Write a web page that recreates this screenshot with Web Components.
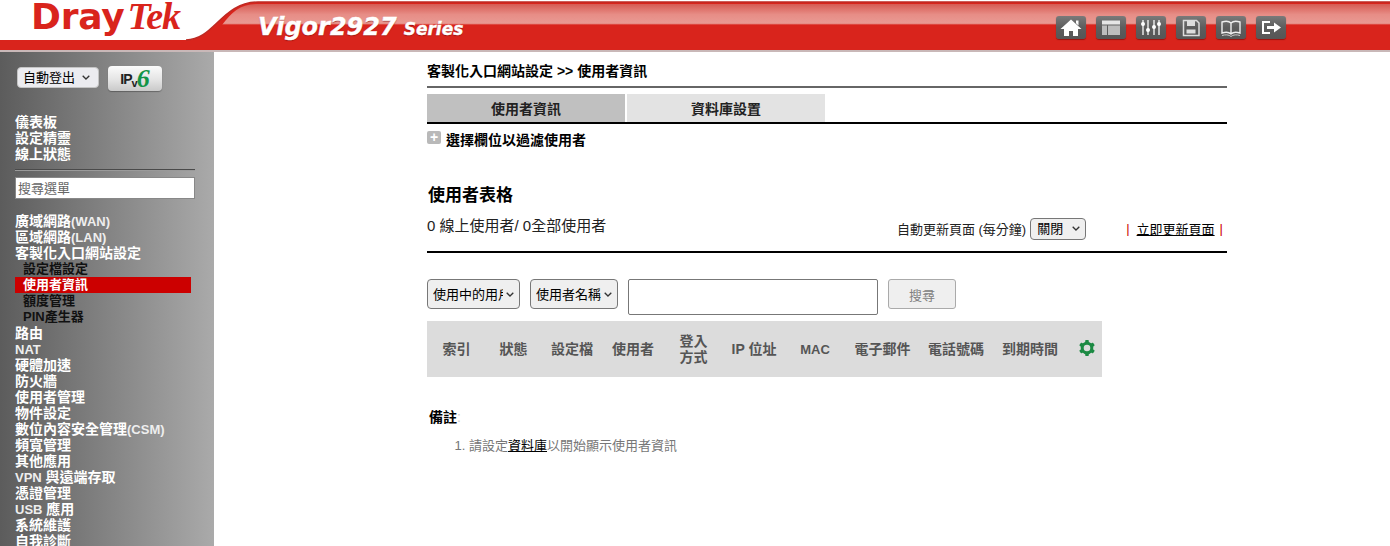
<!DOCTYPE html>
<html lang="zh-TW">
<head>
<meta charset="utf-8">
<title>Vigor2927 Series</title>
<style>
  html, body { margin: 0; height: 546px; overflow: hidden; background: #fff; }
  body { font-family: "Liberation Sans", "Noto Sans CJK TC", sans-serif; display: flex; flex-direction: column; }
  .row { display: flex; flex: 1; min-height: 0; }
  dt-menu-item span { font-size: 13px; color: #eee; }
</style>
</head>
<body>
<dt-header></dt-header>
<div class="row">
  <dt-sidebar>
    <dt-menu-item>儀表板</dt-menu-item>
    <dt-menu-item>設定精靈</dt-menu-item>
    <dt-menu-item>線上狀態</dt-menu-item>
    <dt-menu-search slot="search"></dt-menu-search>
    <dt-menu-item slot="main">廣域網路<span>(WAN)</span></dt-menu-item>
    <dt-menu-item slot="main">區域網路<span>(LAN)</span></dt-menu-item>
    <dt-menu-item slot="main">客製化入口網站設定</dt-menu-item>
    <dt-menu-item slot="main" sub>設定檔設定</dt-menu-item>
    <dt-menu-item slot="main" sub active>使用者資訊</dt-menu-item>
    <dt-menu-item slot="main" sub>額度管理</dt-menu-item>
    <dt-menu-item slot="main" sub>PIN產生器</dt-menu-item>
    <dt-menu-item slot="main">路由</dt-menu-item>
    <dt-menu-item slot="main"><span>NAT</span></dt-menu-item>
    <dt-menu-item slot="main">硬體加速</dt-menu-item>
    <dt-menu-item slot="main">防火牆</dt-menu-item>
    <dt-menu-item slot="main">使用者管理</dt-menu-item>
    <dt-menu-item slot="main">物件設定</dt-menu-item>
    <dt-menu-item slot="main">數位內容安全管理<span>(CSM)</span></dt-menu-item>
    <dt-menu-item slot="main">頻寬管理</dt-menu-item>
    <dt-menu-item slot="main">其他應用</dt-menu-item>
    <dt-menu-item slot="main"><span>VPN</span> 與遠端存取</dt-menu-item>
    <dt-menu-item slot="main">憑證管理</dt-menu-item>
    <dt-menu-item slot="main"><span>USB</span> 應用</dt-menu-item>
    <dt-menu-item slot="main">系統維護</dt-menu-item>
    <dt-menu-item slot="main">自我診斷</dt-menu-item>
  </dt-sidebar>
  <dt-user-page></dt-user-page>
</div>

<script>
// ------------------------------------------------------------
// Cabecalho: faixa vermelha, logo, modelo e botoes de icone
// ------------------------------------------------------------
const ICONS = {
  home: '<path d="M15 3.500 4.500 13H8v7h5v-5h4v5h5v-7h3.500z" fill="#fff"/><path d="M20 4.500h2.500v5l-2.500-2.300z" fill="#fff"/>',
  layout: '<path d="M6 9.500h5v9.500H6zM12 9.500h12v9.500H12z" fill="#bdbdbd"/><path d="M6 4.500h18v4H6z" fill="#e6e6e6"/>',
  sliders: '<g stroke="#eee" stroke-width="1.400"><path d="M7 4v15M12 4v15M18 4v15M23 4v15"/></g><g fill="#fff"><circle cx="7" cy="8" r="2"/><circle cx="12" cy="14" r="2"/><circle cx="18" cy="11" r="2"/><circle cx="23" cy="8" r="2"/></g>',
  save: '<path d="M7.500 4.500h13l2.500 2.500v12.500H7.500z" fill="none" stroke="#ddd" stroke-width="1.500"/><path d="M11 5h8v5h-8zM10.500 13.500h9v4h-9z" fill="#ddd"/>',
  book: '<path d="M15 7c-2-2-6-2-9-1v11c3-1 7-1 9 1 2-2 6-2 9-1V6c-3-1-7-1-9 1zM15 7v11" fill="none" stroke="#eee" stroke-width="1.400"/><path d="M6 19.500c3-1 7-1 9 1 2-2 6-2 9-1" fill="none" stroke="#ccc"/>',
  logout: '<path d="M14 6H7v11h7" fill="none" stroke="#fff" stroke-width="2"/><path d="M11 10h7V6.500l7 5-7 5V13h-7z" fill="#fff"/>'
};

// seta das caixas de selecao, igual nas duas areas
const SETA = `url("data:image/svg+xml,%3Csvg xmlns='http://www.w3.org/2000/svg' width='8' height='5'%3E%3Cpath d='M.7.7 4 4l3.300-3.300' fill='none' stroke='%23333' stroke-width='1.300'/%3E%3C/svg%3E")`;

class DtIconButton extends HTMLElement {
  connectedCallback() {
    const nome = this.getAttribute('icon');
    this.attachShadow({ mode: 'open' }).innerHTML = `
      <style>
        :host { display: block; width: 30px; height: 23px; }
        div {
          height: 100%;
          border-radius: 3px;
          background: linear-gradient(#7a7a7a, #5d5d5d 50%, #565656);
          box-shadow: 0 1px 1px rgba(90, 0, 0, .5);
        }
        svg { display: block; }
      </style>
      <div><svg width="30" height="23" viewBox="0 0 30 23">${ICONS[nome]}</svg></div>`;
  }
}
customElements.define('dt-icon-button', DtIconButton);

class DtHeader extends HTMLElement {
  constructor() {
    super();
    this.attachShadow({ mode: 'open' }).innerHTML = `
      <style>
        :host { display: block; height: 52px; position: relative; flex: none; }
        .faixa { position: absolute; left: 0; top: 0; }
        .conteudo { position: relative; display: flex; height: 50px; }
        .logo {
          margin-left: 31px; width: 227px; color: #d9241c; white-space: nowrap;
          display: flex; align-items: flex-start; height: 40px;
        }
        .logo b { font: 700 36px/33px "DejaVu Sans", sans-serif; height: 33px; display: block; letter-spacing: -.2px; }
        .logo i { font: italic 700 38px/32px "Liberation Serif", serif; height: 32px; display: block; margin-left: 3px; letter-spacing: -1px; }
        .modelo {
          margin-top: 13px; color: #fff; font-family: "DejaVu Sans", sans-serif;
          font-weight: 700; font-style: italic; font-size: 24px; line-height: 28px; white-space: nowrap;
          text-shadow: 0 1px 1px rgba(110, 0, 0, .6); -webkit-text-stroke: .4px #fff;
        }
        .modelo span { font-size: 17px; margin-left: 7px; }
        nav { margin-left: auto; margin-right: 104px; margin-top: 16px; display: flex; gap: 10px; }
      </style>
      <svg class="faixa" width="1390" height="52" viewBox="0 0 1390 52">
        <defs>
          <linearGradient id="brilho" x1="0" y1="0" x2="0" y2="1">
            <stop offset="0" stop-color="#d65a52"/>
            <stop offset=".5" stop-color="#e78d86"/>
            <stop offset=".92" stop-color="#e99a93"/>
            <stop offset="1" stop-color="#d9241c"/>
          </linearGradient>
        </defs>
        <rect y="50" width="1390" height="2" fill="#c9b8b8"/>
        <path d="M0 40H186C214 40 222 2 258 2H1390V50H0Z" fill="#d9241c"/>
        <path d="M222 25C232 12 240 4 258 4H1390V25Z" fill="url(#brilho)"/>
        <path d="M186 40C214 40 222 2 258 2H1390" fill="none" stroke="#bd2a23" stroke-width="1.500"/>
      </svg>
      <div class="conteudo">
        <div class="logo"><b>Dray</b><i>Tek</i></div>
        <div class="modelo">Vigor2927<span>Series</span></div>
        <nav>
          <dt-icon-button icon="home"></dt-icon-button>
          <dt-icon-button icon="layout"></dt-icon-button>
          <dt-icon-button icon="sliders"></dt-icon-button>
          <dt-icon-button icon="save"></dt-icon-button>
          <dt-icon-button icon="book"></dt-icon-button>
          <dt-icon-button icon="logout"></dt-icon-button>
        </nav>
      </div>`;
  }
}
customElements.define('dt-header', DtHeader);

// ------------------------------------------------------------
// Barra lateral
// ------------------------------------------------------------
class DtSidebar extends HTMLElement {
  constructor() {
    super();
    this.attachShadow({ mode: 'open' }).innerHTML = `
      <style>
        :host {
          display: block; width: 214px; flex: none; box-sizing: border-box; overflow: hidden;
          background: linear-gradient(90deg, #5c5c5c, #aaaaaa);
          padding: 14px 0 0 15px;
        }
        .topo { display: flex; align-items: flex-start; gap: 9px; margin-left: 2px; height: 25px; }
        select {
          appearance: none; width: 82px; height: 21px; margin-top: 1px; padding: 0 0 0 5px;
          font: 13px "Liberation Sans", "Noto Sans CJK TC", sans-serif;
          border: 1px solid #c4c4c4; border-radius: 4px; color: #000;
          background: #ececf0 ${SETA} no-repeat right 8px center;
        }
        .ipv6 {
          width: 54px; height: 25px; border-radius: 4px; display: flex; align-items: center; justify-content: center;
          background: linear-gradient(#fbfbfb, #e4e4e4 55%, #c9c9c9); box-shadow: 0 1px 1px rgba(0,0,0,.3);
          font: 700 14px "Liberation Sans", sans-serif; color: #222; letter-spacing: -1px;
        }
        .ipv6 small { font-size: 11px; position: relative; top: 4px; }
        .ipv6 i { font: italic 700 26px/25px "Liberation Serif", serif; color: #129447; letter-spacing: 0; }
        .menu { margin-top: 23px; }
        hr { width: 180px; height: 0; margin: 7px 0 6px; border: 0; border-top: 1px solid #4a4a4a; border-bottom: 1px solid #9a9a9a; }
        .principal { margin-top: 14px; }
      </style>
      <div class="topo">
        <select><option>自動登出</option></select>
        <div class="ipv6">IP<small>v</small><i>6</i></div>
      </div>
      <div class="menu"><slot></slot></div>
      <hr>
      <slot name="search"></slot>
      <div class="principal"><slot name="main"></slot></div>`;
  }
}
customElements.define('dt-sidebar', DtSidebar);

class DtMenuSearch extends HTMLElement {
  constructor() {
    super();
    this.attachShadow({ mode: 'open' }).innerHTML = `
      <style>
        :host { display: block; width: 180px; }
        input {
          display: block; box-sizing: border-box; width: 180px; height: 22px; padding: 0 2px; margin: 0;
          border: 1px solid #888; background: #fff;
          font: 13px "Liberation Sans", "Noto Sans CJK TC", sans-serif;
        }
        input::placeholder { color: #666; }
      </style>
      <input placeholder="搜尋選單">`;
  }
}
customElements.define('dt-menu-search', DtMenuSearch);

class DtMenuItem extends HTMLElement {
  constructor() {
    super();
    this.attachShadow({ mode: 'open' }).innerHTML = `
      <style>
        :host {
          display: block; height: 16px; line-height: 16px; width: 176px; white-space: nowrap;
          font-size: 14px; font-weight: 700; color: #fff;
          font-family: "Liberation Sans", "Noto Sans CJK TC", sans-serif;
        }
        :host([sub]) { font-size: 13px; color: #111; text-indent: 8px; }
        :host([active]) { color: #fff; background: #cc0000; }
      </style>
      <slot></slot>`;
  }
}
customElements.define('dt-menu-item', DtMenuItem);

// ------------------------------------------------------------
// Abas e tabela de usuarios
// ------------------------------------------------------------
class DtTabs extends HTMLElement {
  constructor() {
    super();
    this.attachShadow({ mode: 'open' }).innerHTML = `
      <style>
        :host { display: flex; gap: 2px; height: 28px; border-bottom: 2px solid #000; }
        div {
          width: 198px; text-align: center; line-height: 30px; font-size: 14px; font-weight: 700; color: #222;
          background: #e3e3e3;
        }
        .ativa { background: #c0c0c0; }
      </style>
      <div class="ativa">使用者資訊</div>
      <div>資料庫設置</div>`;
  }
}
customElements.define('dt-tabs', DtTabs);

class DtUserTable extends HTMLElement {
  constructor() {
    super();
    const colunas = [
      ['索引', 59], ['狀態', 55], ['設定檔', 62], ['使用者', 60], ['登入<br>方式', 61], ['IP 位址', 60],
      ['<span>MAC</span>', 62], ['電子郵件', 73], ['電話號碼', 74], ['到期時間', 74]
    ];
    const dentes = [0, 60, 120, 180, 240, 300]
      .map(a => `<rect x="7.200" y="1" width="3.600" height="4" rx=".8" transform="rotate(${a} 9 9)"/>`).join('');
    const celulas = colunas.map(c => `<div style="width:${c[1]}px">${c[0]}</div>`).join('');
    this.attachShadow({ mode: 'open' }).innerHTML = `
      <style>
        :host {
          display: flex; align-items: center; width: 675px; height: 56px; background: #dcdcdc;
          font-size: 14px; font-weight: 700; color: #555; line-height: 16px;
        }
        div { text-align: center; flex: none; }
        span { font-size: 13px; }
        svg { flex: none; margin: -3px 0 0 11px; display: block; }
      </style>
      ${celulas}
      <svg width="18" height="18" viewBox="0 0 18 18" fill="#1c8a43">
        ${dentes}
        <circle cx="9" cy="9" r="4.800" fill="none" stroke="#1c8a43" stroke-width="3"/>
      </svg>`;
  }
}
customElements.define('dt-user-table', DtUserTable);

// ------------------------------------------------------------
// Pagina: Informacoes do usuario
// ------------------------------------------------------------
class DtUserPage extends HTMLElement {
  constructor() {
    super();
    this.attachShadow({ mode: 'open' }).innerHTML = `
      <style>
        :host {
          display: block; flex: 1; padding: 0 0 0 213px; min-width: 0;
          font-family: "Liberation Sans", "Noto Sans CJK TC", sans-serif; color: #000;
        }
        .conteudo { width: 800px; }
        .caminho { height: 34px; line-height: 38px; font-size: 14px; font-weight: 700; border-bottom: 2px solid #666; margin-bottom: 6px; }
        .filtro { display: flex; align-items: center; gap: 5px; height: 30px; font-size: 14px; font-weight: 700; }
        .mais {
          width: 14px; height: 13px; border-radius: 2px; background: #b9b9b9; position: relative; top: -2px;
          display: grid; place-items: center; color: #fff; font: 700 14px/13px "Liberation Sans", sans-serif;
        }
        h2 { margin: 30px 0 0 1px; font-size: 17px; line-height: 24px; font-weight: 700; }
        .status {
          display: flex; align-items: center; height: 33px; border-bottom: 2px solid #000;
          padding-bottom: 10px; font-size: 15px; color: #222;
        }
        .atualizar { margin-left: auto; display: flex; align-items: center; font-size: 13px; padding: 8px 4px 0 0; }
        .atualizar select { width: 56px; height: 22px; margin: 0 40px 0 4px; padding-left: 6px; }
        .atualizar a { color: #000; text-decoration: underline; margin: 0 5px 0 7px; }
        .atualizar em { color: #c00; font-style: normal; }
        select {
          appearance: none; font: 13px "Liberation Sans", "Noto Sans CJK TC", sans-serif; border: 1px solid #777; border-radius: 4px;
          background: #efefef ${SETA} no-repeat right 5px center; color: #000; padding: 0 16px 0 5px;
        }
        .busca { display: flex; align-items: flex-start; gap: 10px; margin: 26px 0 6px; }
        .busca select { height: 30px; }
        .busca input { box-sizing: border-box; width: 250px; height: 36px; margin: 0; border: 1px solid #777; border-radius: 2px; background: #fff; }
        button {
          width: 68px; height: 30px; padding: 0; border: 1px solid #aaa; border-radius: 3px; background: #efefef;
          font: 13px "Liberation Sans", "Noto Sans CJK TC", sans-serif; color: #808080;
        }
        .nota { margin: 32px 0 0 2px; font-size: 14px; line-height: 16px; font-weight: 700; }
        .nota span { color: #ccc; font-weight: 400; }
        ol { margin: 13px 0 0; padding: 0 0 0 42px; font-size: 13px; line-height: 16px; color: #777; }
        ol a { color: #000; text-decoration: underline; }
      </style>
      <div class="conteudo">
        <div class="caminho">客製化入口網站設定 &gt;&gt; 使用者資訊</div>
        <dt-tabs></dt-tabs>
        <div class="filtro"><span class="mais">+</span><span>選擇欄位以過濾使用者</span></div>
        <h2>使用者表格</h2>
        <div class="status">
          <span>0 線上使用者/ 0全部使用者</span>
          <div class="atualizar">
            <span>自動更新頁面 (每分鐘)</span>
            <select><option>關閉</option></select>
            <em>|</em><a href="#">立即更新頁面</a><em>|</em>
          </div>
        </div>
        <div class="busca">
          <select style="width:93px"><option>使用中的用戶</option></select>
          <select style="width:88px"><option>使用者名稱</option></select>
          <input>
          <button>搜尋</button>
        </div>
        <dt-user-table></dt-user-table>
        <div class="nota">備註<span>:</span></div>
        <ol><li>請設定<a href="#">資料庫</a>以開始顯示使用者資訊</li></ol>
      </div>`;
  }
}
customElements.define('dt-user-page', DtUserPage);
</script>
</body>
</html>
